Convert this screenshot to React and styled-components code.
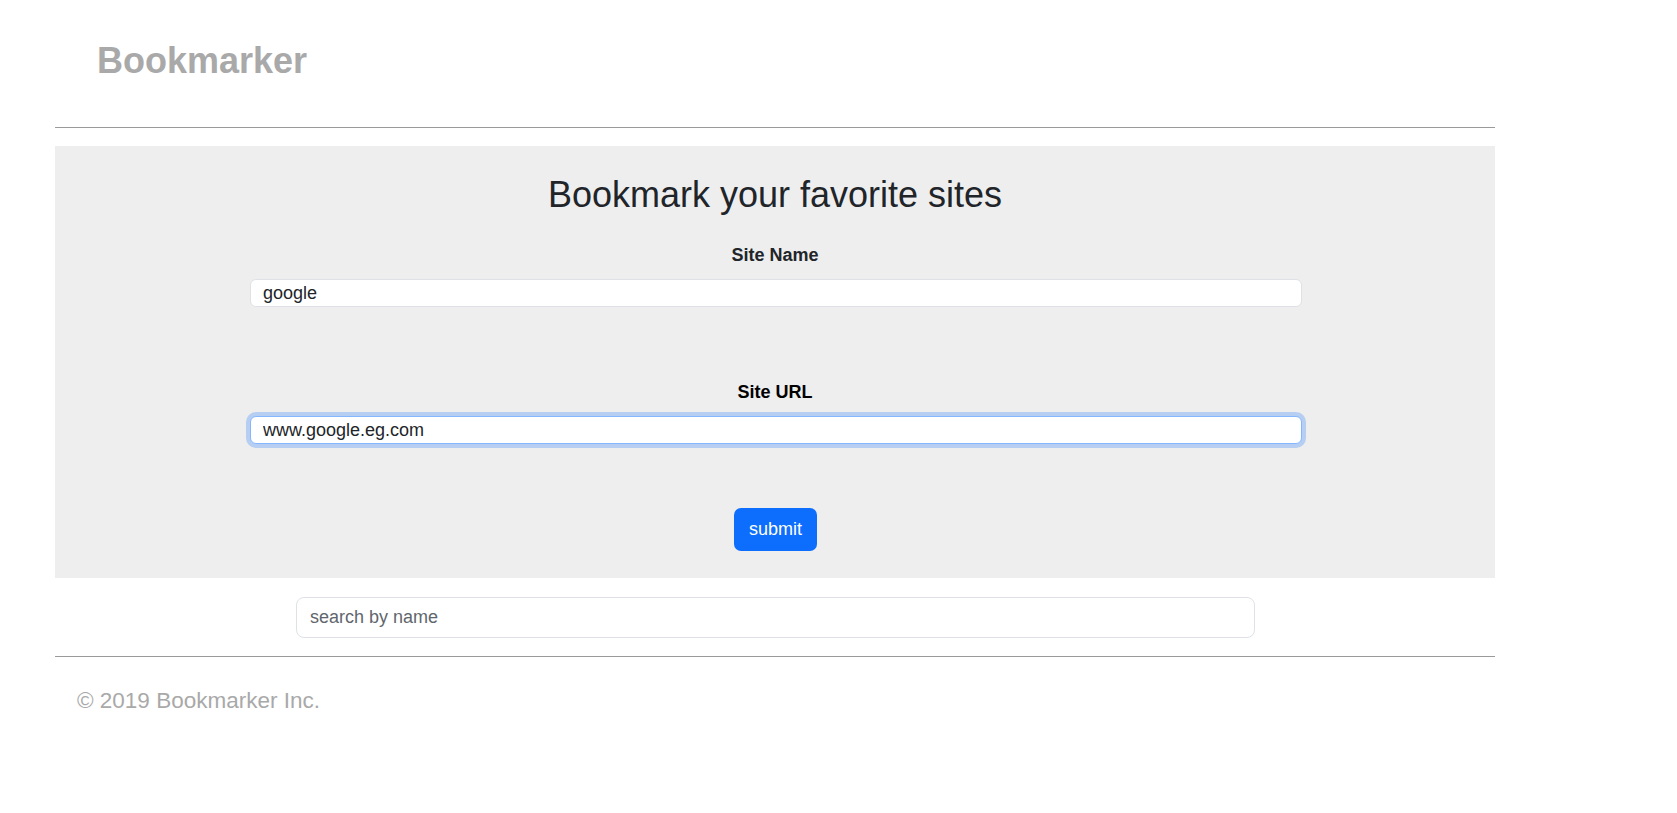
import React, { useEffect, useRef } from 'react';
import styled, { createGlobalStyle } from 'styled-components';

const GlobalStyle = createGlobalStyle`
  body {
    margin: 0;
    background: #fff;
    font-family: "Liberation Sans", Arial, sans-serif;
    color: #212529;
  }
  * { box-sizing: border-box; }
`;

const App = () => {
  const urlRef = useRef(null);

  // keep the caret at the end of the focused URL field
  useEffect(() => {
    const el = urlRef.current;
    if (el) {
      el.focus();
      el.setSelectionRange(el.value.length, el.value.length);
    }
  }, []);

  return (
    <Page>
      <GlobalStyle />
      <Header>
        <Brand>Bookmarker</Brand>
      </Header>
      <Divider $top={45} />

      <FormPanel>
        <Title>Bookmark your favorite sites</Title>
        <Label $gap={29}>Site Name</Label>
        <Field defaultValue="google" />
        <Label $gap={75} $dark>Site URL</Label>
        <Field ref={urlRef} defaultValue="www.google.eg.com" $focused />
        <SubmitButton type="button">submit</SubmitButton>
      </FormPanel>

      <SearchRow>
        <SearchInput placeholder="search by name" />
      </SearchRow>

      <Divider $top={18} />
      <Footer>© 2019 Bookmarker Inc.</Footer>
    </Page>
  );
};

export default App;


const Page = styled.div`
  width: 1440px;
  margin-left: 55px;
`;

const Header = styled.header`
  padding: 39px 0 0 42px;
`;

const Brand = styled.h1`
  margin: 0;
  font-size: 36px;
  line-height: 43px;
  font-weight: 700;
  color: #a9a9a9;
`;

const Divider = styled.div`
  height: 1px;
  background: #9a9a9a;
  margin-top: ${(p) => p.$top}px;
`;

const FormPanel = styled.section`
  margin-top: 18px;
  background: #eeeeee;
  padding: 27px 0 27px;
  display: flex;
  flex-direction: column;
  align-items: center;
`;

const Title = styled.h2`
  margin: 0;
  font-size: 36px;
  line-height: 43px;
  font-weight: 400;
  color: #212529;
`;

const Label = styled.label`
  margin-top: ${(p) => p.$gap}px;
  margin-bottom: 13px;
  font-size: 18px;
  line-height: 21px;
  font-weight: 700;
  color: ${(p) => (p.$dark ? '#000' : '#212529')};
`;

const Field = styled.input`
  width: 1052px;
  height: 28px;
  margin-left: 2px;
  padding: 0 12px;
  font-family: inherit;
  font-size: 18px;
  color: #212529;
  background: #fff;
  border: 1px solid ${(p) => (p.$focused ? '#86b7fe' : '#dee2e6')};
  border-radius: 6px;
  box-shadow: ${(p) => (p.$focused ? '0 0 0 4px rgba(13, 110, 253, 0.25)' : 'none')};
  outline: none;
  caret-color: #000;
`;

const SubmitButton = styled.button`
  margin-top: 64px;
  height: 43px;
  padding: 0 15px;
  margin-left: 1px;
  background: #0d6efd;
  color: #fff;
  border: none;
  border-radius: 7px;
  font-family: inherit;
  font-size: 18px;
  cursor: pointer;
`;

const SearchRow = styled.div`
  display: flex;
  justify-content: center;
  margin-top: 19px;
`;

const SearchInput = styled.input`
  width: 959px;
  height: 41px;
  margin-left: 1px;
  padding: 0 13px;
  font-family: inherit;
  font-size: 18px;
  color: #212529;
  border: 1px solid #dee2e6;
  border-radius: 8px;
  outline: none;
  &::placeholder {
    color: #5f666d;
  }
`;

const Footer = styled.p`
  margin: 30px 0 0;
  padding-left: 22px;
  font-size: 22.5px;
  line-height: 27px;
  color: #a9a9a9;
`;
